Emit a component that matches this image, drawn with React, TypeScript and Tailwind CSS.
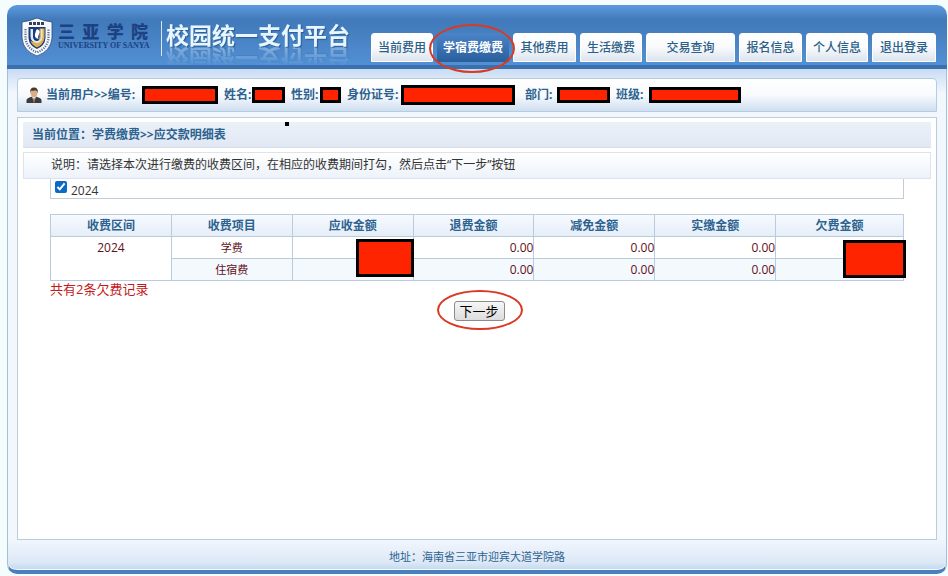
import type { ReactNode } from "react";

const sans = "font-['Open_Sans','Noto_Sans_CJK_SC',sans-serif]";

const tabs = [
  { label: "当前费用", width: "w-[62px]" },
  { label: "学宿费缴费", width: "w-[72px]", active: true },
  { label: "其他费用", width: "w-[63px]" },
  { label: "生活缴费", width: "w-[62px]" },
  { label: "交易查询", width: "w-[89px]" },
  { label: "报名信息", width: "w-[63px]" },
  { label: "个人信息", width: "w-[62px]" },
  { label: "退出登录", width: "w-[64px]" },
];

const userFields = [
  { label: "当前用户>>编号:", width: "w-[172px]", box: "w-[76px] h-[18px]" },
  { label: "姓名:", width: "w-[61px]", box: "w-[33px] h-4" },
  { label: "性别:", width: "w-[50px]", box: "w-[21px] h-4" },
  { label: "身份证号:", width: "w-[168px]", box: "w-[114px] h-5" },
  { label: "部门:", width: "w-[85px] ml-1", box: "w-[53px] h-4" },
  { label: "班级:", width: "w-[125px]", box: "w-[92px] h-4" },
];

const columns = ["收费区间", "收费项目", "应收金额", "退费金额", "减免金额", "实缴金额", "欠费金额"];

function Shield() {
  return (
    <svg viewBox="0 0 32 40" className="h-10 w-8 shrink-0" aria-hidden="true">
      <path d="M1 5 Q9 4 16 1 Q23 4 31 5 V21 Q30 34 16 39 Q2 34 1 21Z" fill="#f6f8fb" stroke="#24477f" strokeWidth="0.8" />
      <path d="M4.5 12 V21 Q5.500 31 16 35.500 Q26.500 31 27.500 21 V12" fill="none" stroke="#5a6f96" strokeWidth="2.200" strokeDasharray="1.200 1.200" />
      <path d="M8 6.500 H24" stroke="#33415f" strokeWidth="3" strokeDasharray="3 1" />
      <path d="M7.500 10 H24.500 V21 Q24 28.500 16 32 Q8 28.500 7.500 21Z" fill="#173a78" />
      <path d="M18.500 11.500 H23.500 V21 Q22.500 27.500 16 30.500 Q11 28 9.500 24 Q18 28 18.500 20Z" fill="#e0b04a" />
      <path d="M9.500 12 H12 V20 Q12.500 24 16 24 Q19.500 24 20 20 V12 H21.500 V20 Q20.500 26 15.500 26 Q9.500 25 9.500 19Z" fill="#dfe8f4" />
      <path d="M16 12 Q20 14 18 17 Q16.500 20 17.500 22 Q13 21 14 17 Q14.500 14 16 12Z" fill="#ffffff" />
    </svg>
  );
}

function UserIcon() {
  return (
    <svg viewBox="0 0 16 17" className="h-[17px] w-4 shrink-0" aria-hidden="true">
      <path d="M0.500 16 V13 Q1 11 5.500 9.800 H10.500 Q15 11 15.500 13 V16Z" fill="#3b3a3c" />
      <path d="M6 9.500 L8 15.500 L10 9.500Z" fill="#f3f1ed" />
      <path d="M7.500 11 H8.500 L9 14 L8 16 L7 14Z" fill="#8b6840" />
      <ellipse cx="8" cy="5.800" rx="3.400" ry="4.400" fill="#d9ae86" />
      <path d="M4.300 6 Q3.500 0.500 8 0.500 Q12.500 0.500 11.700 6 Q11 3.500 9.500 3.200 Q6 4 5.200 3.600Z" fill="#4a382c" />
    </svg>
  );
}

function Ring({ className }: { className: string }) {
  return <span aria-hidden="true" className={`pointer-events-none absolute z-10 rounded-[50%] border-2 border-[#d93a24] ${className}`} />;
}

function Redaction({ className }: { className: string }) {
  return <span aria-hidden="true" className={`block border-[3px] border-black bg-[#ff2400] ${className}`} />;
}

function Cell({ children, className = "" }: { children?: ReactNode; className?: string }) {
  return <td className={`border border-[#b9cbdc] p-0 ${className}`}>{children}</td>;
}

export default function App() {
  return (
    <div className={`flex min-h-screen flex-col bg-[#f4fcfd] pt-[5px] pr-px pb-[2px] pl-[7px] text-[11px] leading-4 ${sans}`}>
      <header className="flex h-16 shrink-0 justify-between rounded-t-[10px] border-b-4 border-[#3a70ae] bg-linear-to-b from-[#5c9be0] via-[#4179b9] via-25% to-[#5290d4] pr-[11px] pl-[14px]">
        <div className="flex items-start pt-3">
          <Shield />
          <div className="mt-1 ml-[5px] w-[90px] text-[#1d4284]">
            <div className="flex justify-between text-[17px] leading-5 font-black font-['Noto_Sans_CJK_SC',sans-serif]">
              <span>三</span>
              <span>亚</span>
              <span>学</span>
              <span>院</span>
            </div>
            <div className="text-[8px] leading-[10px] font-bold whitespace-nowrap font-['Liberation_Serif',serif]">UNIVERSITY OF SANYA</div>
          </div>
          <div className="mt-1 ml-[13px] h-[35px] w-px bg-[#d5e6f6]" />
          <h1 className="mt-[2px] ml-1 text-[23px] leading-8 font-bold whitespace-nowrap text-[#e8f7ff] [-webkit-box-reflect:below_-9px_linear-gradient(transparent_25%,rgba(255,255,255,0.45))] [text-shadow:1px_1px_1px_#2b5c95]">
            校园统一支付平台
          </h1>
        </div>
        <nav className="flex items-start gap-1 pt-7">
          {tabs.map((tab) => (
            <a
              key={tab.label}
              href="#"
              className={`relative flex h-[29px] items-center justify-center text-xs whitespace-nowrap ${tab.width} ${
                tab.active
                  ? "bg-linear-to-b from-[#4a84c8] to-[#2a5f9c] font-bold text-white"
                  : "rounded-t-[3px] border border-white bg-linear-to-b from-white via-[#f8fafc] to-[#dce4ee] font-medium text-[#2c5f87]"
              }`}
            >
              {tab.label}
              {tab.active && <Ring className="-top-[9px] -left-2 h-[49px] w-[86px]" />}
            </a>
          ))}
        </nav>
      </header>

      <div className="flex flex-1 flex-col gap-[5px] border-x border-[#a5bfd6] bg-linear-to-b from-[#c9dcf3] to-[#f1f7fd] to-[24px] px-[9px] pt-[9px]">
        <section className="flex h-[34px] shrink-0 items-center gap-[6px] rounded-t-[4px] border border-[#b6cde0] bg-linear-to-b from-white via-[#f8fafd] via-50% to-[#cfdff0] pl-2 text-xs font-bold text-[#2c628f]">
          <UserIcon />
          <div className="-ml-[2px] flex items-center gap-[6px]">
            {userFields.map((field) => (
              <div key={field.label} className={`flex items-center justify-between whitespace-nowrap ${field.width}`}>
                <span>{field.label}</span>
                <Redaction className={`shrink-0 ${field.box}`} />
              </div>
            ))}
          </div>
        </section>

        <main className="flex-1 border border-[#b9cddd] bg-white">
          <div className="relative mx-[5px] mt-1 flex h-[26px] items-center border-b border-[#d5dfeb] bg-linear-to-b from-[#ebf1f9] to-[#e1e8f3] pl-[9px] text-xs font-bold text-[#2c628f]">
            当前位置：学费缴费&gt;&gt;应交款明细表
            <span aria-hidden="true" className="absolute top-0 left-[262px] size-1 bg-black" />
          </div>
          <p className="mx-[5px] mt-1 flex h-[27px] items-center border border-[#dce3ed] bg-linear-to-b from-white to-[#edf2fa] pb-px pl-[27px] text-xs text-[#333]">
            说明：请选择本次进行缴费的收费区间，在相应的收费期间打勾，然后点击“下一步”按钮
          </p>
          <div className="mx-8 flex h-5 items-center border-x border-b border-[#c3cdd6] pl-1">
            <label className="flex items-center gap-1 text-xs text-[#333]">
              <input type="checkbox" defaultChecked className="mb-1 size-3 accent-[#0b6bc4]" />
              <span className="pt-1">2024</span>
            </label>
          </div>

          <div className="mx-8 mt-[15px]">
            <table className="w-full table-fixed border-collapse text-[#5f1018]">
              <thead>
                <tr className="h-[22px] bg-linear-to-b from-[#f7faff] to-[#e4edf7] text-xs text-[#2c628f]">
                  {columns.map((name, index) => (
                    <th key={name} className={`border border-[#b9cbdc] p-0 font-bold ${index < 6 ? "w-[14.17%]" : ""}`}>
                      {name}
                    </th>
                  ))}
                </tr>
              </thead>
              <tbody>
                <tr className="h-[22px]">
                  <td rowSpan={2} className="border border-[#b9cbdc] p-0 pt-[3px] text-center align-top text-xs">
                    2024
                  </td>
                  <Cell className="text-center">学费</Cell>
                  <Cell className="relative">
                    <Redaction className="absolute top-[2px] -right-px h-[38px] w-[58px]" />
                  </Cell>
                  <Cell className="text-right text-xs">0.00</Cell>
                  <Cell className="text-right text-xs">0.00</Cell>
                  <Cell className="text-right text-xs">0.00</Cell>
                  <Cell className="relative">
                    <Redaction className="absolute top-[3px] -right-[3px] h-[38px] w-[63px]" />
                  </Cell>
                </tr>
                <tr className="h-[22px] bg-[#f4f9fe]">
                  <Cell className="text-center">住宿费</Cell>
                  <Cell />
                  <Cell className="text-right text-xs">0.00</Cell>
                  <Cell className="text-right text-xs">0.00</Cell>
                  <Cell className="text-right text-xs">0.00</Cell>
                  <Cell />
                </tr>
              </tbody>
            </table>
            <p className="pb-1 text-[13px] leading-4 text-[#c41a1a]">共有2条欠费记录</p>
            <div className="flex justify-center pl-1">
              <div className="relative">
                <button type="button" className="block h-5 w-[51px] rounded-[3px] border border-[#8b8b8b] bg-linear-to-b from-[#f6f6f6] to-[#dddddd] text-[13px] leading-4 text-black">
                  下一步
                </button>
                <Ring className="-top-[11px] -left-[17px] h-[40px] w-[86px]" />
              </div>
            </div>
          </div>
        </main>
      </div>

      <footer className="flex h-[34px] shrink-0 items-center justify-center rounded-b-[10px] border-x border-b-4 border-x-[#a5bfd6] border-b-[#4a7fbf] bg-linear-to-b from-[#f1f6fd] via-[#dde8f7] via-75% to-[#bfd9ee] pt-1 text-[#2c628f] shadow-[inset_0_-1px_0_#f4fafe]">
        地址：海南省三亚市迎宾大道学院路
      </footer>
    </div>
  );
}
